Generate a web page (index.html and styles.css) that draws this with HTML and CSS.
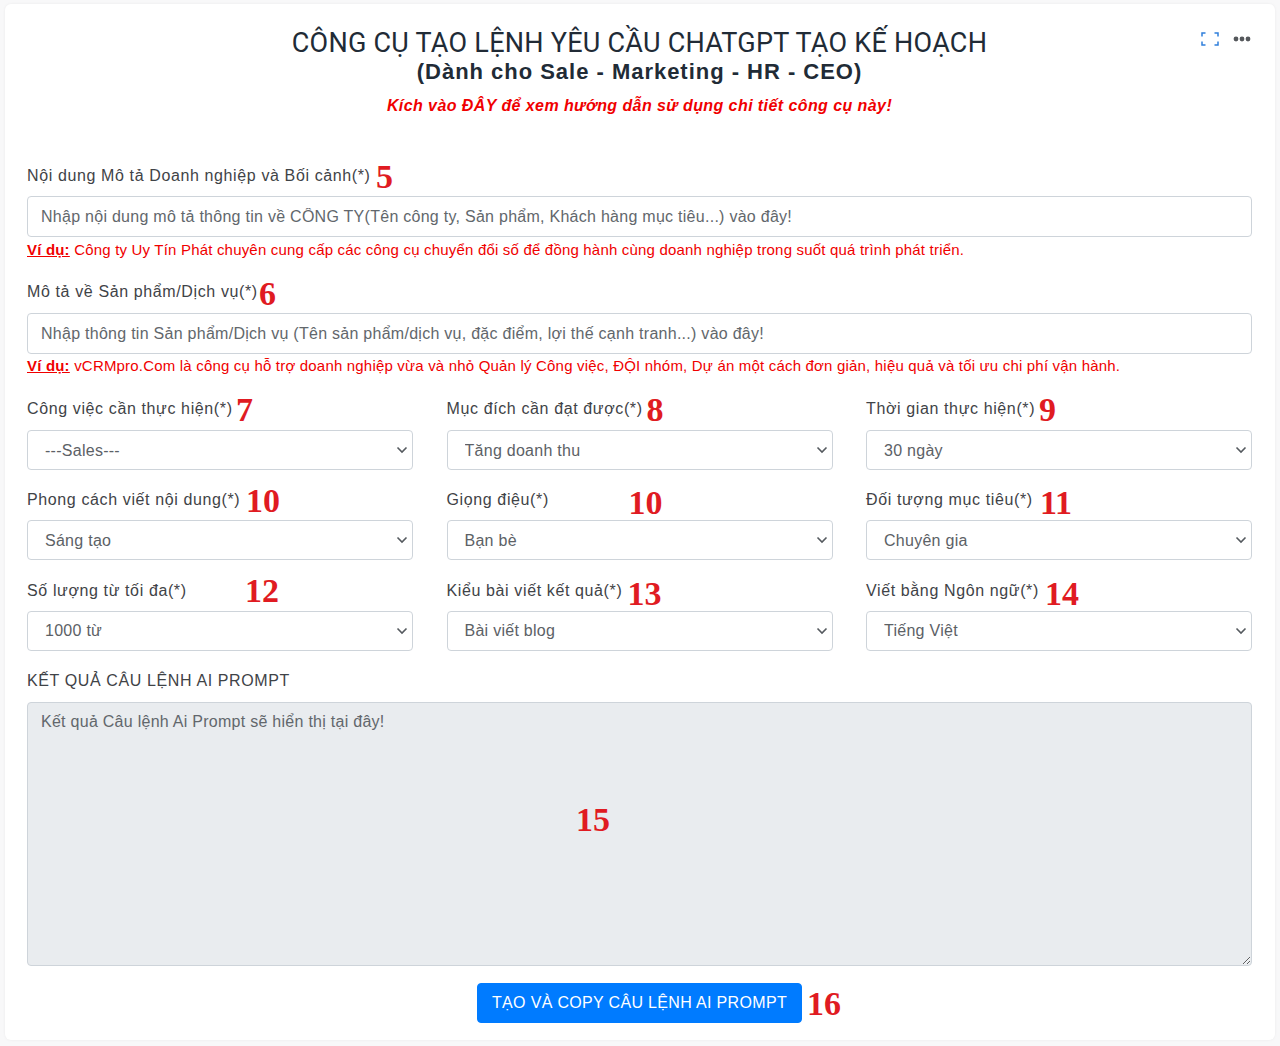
FILE: index.html
```html
<!DOCTYPE html>
<html lang="en">
<head>
    <meta charset="UTF-8">
    <title>Công cụ tạo lệnh</title>
    <link rel="stylesheet" href="styles.css">
</head>
<body>
<main class="card">
    <div class="card-tools">
        <svg class="tool-expand" width="18" height="14" viewBox="0 0 18 14" fill="none" stroke="#2f7fdc" stroke-width="1.5">
            <path d="M1 4.5V1H4.5M13.5 1H17V4.5M17 9.5V13H13.5M4.5 13H1V9.5"/>
        </svg>
        <svg class="tool-more" width="18" height="6" viewBox="0 0 18 6" fill="#55585c">
            <circle cx="3" cy="3" r="2.4"/><circle cx="9" cy="3" r="2.4"/><circle cx="15" cy="3" r="2.4"/>
        </svg>
    </div>

    <header class="card-head">
        <h1>CÔNG CỤ TẠO LỆNH YÊU CẦU CHATGPT TẠO KẾ HOẠCH</h1>
        <h2>(Dành cho Sale - Marketing - HR - CEO)</h2>
        <p class="guide">Kích vào ĐÂY để xem hướng dẫn sử dụng chi tiết công cụ này!</p>
    </header>

    <form class="form">
        <div class="field">
            <label>Nội dung Mô tả Doanh nghiệp và Bối cảnh(*)</label>
            <span class="mark mark-5">5</span>
            <input type="text" placeholder="Nhập nội dung mô tả thông tin về CÔNG TY(Tên công ty, Sản phẩm, Khách hàng mục tiêu...) vào đây!">
            <p class="hint"><b>Ví dụ:</b> Công ty Uy Tín Phát chuyên cung cấp các công cụ chuyển đổi số để đồng hành cùng doanh nghiệp trong suốt quá trình phát triển.</p>
        </div>
        <div class="field">
            <label>Mô tả về Sản phẩm/Dịch vụ(*)</label>
            <span class="mark mark-6">6</span>
            <input type="text" placeholder="Nhập thông tin Sản phẩm/Dịch vụ (Tên sản phẩm/dịch vụ, đặc điểm, lợi thế cạnh tranh...) vào đây!">
            <p class="hint"><b>Ví dụ:</b> vCRMpro.Com là công cụ hỗ trợ doanh nghiệp vừa và nhỏ Quản lý Công việc, ĐỘI nhóm, Dự án một cách đơn giản, hiệu quả và tối ưu chi phí vận hành.</p>
        </div>

        <div class="select-grid">
            <div class="cell">
                <label>Công việc cần thực hiện(*)</label>
                <span class="mark mark-7">7</span>
                <select><option>---Sales---</option></select>
            </div>
            <div class="cell">
                <label>Mục đích cần đạt được(*)</label>
                <span class="mark mark-8">8</span>
                <select><option>Tăng doanh thu</option></select>
            </div>
            <div class="cell">
                <label>Thời gian thực hiện(*)</label>
                <span class="mark mark-9">9</span>
                <select><option>30 ngày</option></select>
            </div>
            <div class="cell">
                <label>Phong cách viết nội dung(*)</label>
                <span class="mark mark-10a">10</span>
                <select><option>Sáng tạo</option></select>
            </div>
            <div class="cell">
                <label>Giọng điệu(*)</label>
                <span class="mark mark-10b">10</span>
                <select><option>Bạn bè</option></select>
            </div>
            <div class="cell">
                <label>Đối tượng mục tiêu(*)</label>
                <span class="mark mark-11">11</span>
                <select><option>Chuyên gia</option></select>
            </div>
            <div class="cell">
                <label>Số lượng từ tối đa(*)</label>
                <span class="mark mark-12">12</span>
                <select><option>1000 từ</option></select>
            </div>
            <div class="cell">
                <label>Kiểu bài viết kết quả(*)</label>
                <span class="mark mark-13">13</span>
                <select><option>Bài viết blog</option></select>
            </div>
            <div class="cell">
                <label>Viết bằng Ngôn ngữ(*)</label>
                <span class="mark mark-14">14</span>
                <select><option>Tiếng Việt</option></select>
            </div>
        </div>

        <div class="result">
            <label>KẾT QUẢ CÂU LỆNH AI PROMPT</label>
            <span class="mark mark-15">15</span>
            <textarea readonly placeholder="Kết quả Câu lệnh Ai Prompt sẽ hiển thị tại đây!"></textarea>
        </div>

        <div class="actions">
            <button type="button">TẠO VÀ COPY CÂU LỆNH AI PROMPT</button>
            <span class="mark mark-16">16</span>
        </div>
    </form>
</main>
</body>
</html>
```

FILE: styles.css
```css
* {
    box-sizing: border-box;
}

body {
    margin: 0;
    padding: 4px 5px 6px;
    background-color: #f8f8f9;
    font-family: "Liberation Sans", Arial, sans-serif;
    color: #3f4347;
}

.card {
    position: relative;
    height: 1036px;
    padding: 0 23px 0 22px;
    background-color: #fff;
    border-radius: 6px;
    box-shadow: 0 0 3px rgba(0, 0, 0, 0.06);
}

.card-tools {
    position: absolute;
    top: 28px;
    right: 24px;
    display: flex;
    align-items: center;
    gap: 14px;
}

.card-head {
    height: 159px;
    padding-top: 21px;
    text-align: center;
}

h1 {
    margin: 0;
    padding-top: 1px;
    height: 34px;
    font-family: Roboto, sans-serif;
    font-size: 27px;
    font-weight: 400;
    line-height: 34px;
    letter-spacing: 0.25px;
    color: #212b36;
}

h2 {
    margin: 0;
    font-size: 22px;
    font-weight: 700;
    line-height: 26px;
    letter-spacing: 0.98px;
    color: #212b36;
}

.guide {
    margin: 9px 0 0;
    font-size: 16px;
    font-weight: 700;
    font-style: italic;
    line-height: 24px;
    letter-spacing: 0.42px;
    color: #f00000;
}

label {
    display: block;
    height: 24px;
    margin-bottom: 9px;
    font-size: 16px;
    line-height: 24px;
    letter-spacing: 0.62px;
    color: #3f4347;
}

.field:first-child label,
.cell:nth-child(n+4) label {
    height: 25px;
    margin-bottom: 8px;
    line-height: 26px;
}

input,
select,
textarea {
    display: block;
    width: 100%;
    border: 1px solid #ced4da;
    border-radius: 4px;
    background-color: #fff;
    font-family: "Liberation Sans", Arial, sans-serif;
    font-size: 16px;
    letter-spacing: 0.27px;
    color: #5c6166;
}

input {
    height: 41px;
    padding: 0 13px;
}

input::placeholder,
textarea::placeholder {
    color: #62676c;
    opacity: 1;
}

.field {
    position: relative;
    margin-bottom: 17px;
}

.hint {
    height: 26px;
    margin: 0;
    padding-top: 1px;
    font-size: 15px;
    line-height: 24px;
    letter-spacing: 0.19px;
    color: #f00000;
}

.field + .field .hint {
    padding-top: 0;
}

.hint b {
    text-decoration: underline;
}

.select-grid {
    display: grid;
    grid-template-columns: repeat(3, 1fr);
    column-gap: 33.5px;
    row-gap: 17.4px;
}

.cell {
    position: relative;
}

select {
    height: 40px;
    padding: 0 30px 0 17px;
    appearance: none;
    background-image: url("data:image/svg+xml,%3Csvg xmlns='http://www.w3.org/2000/svg' width='12' height='8' viewBox='0 0 12 8'%3E%3Cpath d='M1.5 1.5 6 6l4.5-4.5' fill='none' stroke='%23555a5f' stroke-width='1.6'/%3E%3C/svg%3E");
    background-repeat: no-repeat;
    background-position: right 4px center;
}

.result {
    position: relative;
    margin-top: 18px;
}

textarea {
    height: 264px;
    padding: 10px 13px;
    background-color: #e9ecef;
    resize: vertical;
}

.actions {
    position: relative;
    display: flex;
    justify-content: center;
    margin-top: 17px;
}

button {
    height: 40px;
    padding: 0 13.5px;
    border: 1px solid #007bff;
    border-radius: 4px;
    background-color: #007bff;
    font-family: "Liberation Sans", Arial, sans-serif;
    font-size: 16px;
    letter-spacing: 0.33px;
    color: #fff;
}

/* red numbers pasted over the form */
.mark {
    position: absolute;
    font-family: "Liberation Serif", serif;
    font-size: 34px;
    font-weight: 700;
    line-height: 34px;
    color: #e01b22;
}

.mark-5 { left: 349px; top: -3px; }
.mark-6 { left: 232px; top: -3px; }
.mark-7 { left: 209px; top: -4px; }
.mark-8 { left: 200px; top: -4px; }
.mark-9 { left: 173px; top: -4px; }
.mark-10a { left: 219px; top: -3px; }
.mark-10b { left: 182px; top: -1px; }
.mark-11 { left: 174px; top: -1px; }
.mark-12 { left: 218px; top: -4px; }
.mark-13 { left: 181px; top: -1px; }
.mark-14 { left: 179px; top: -1px; }
.mark-15 { left: 549px; top: 134px; }
.mark-16 { left: 780px; top: 4px; }
```
